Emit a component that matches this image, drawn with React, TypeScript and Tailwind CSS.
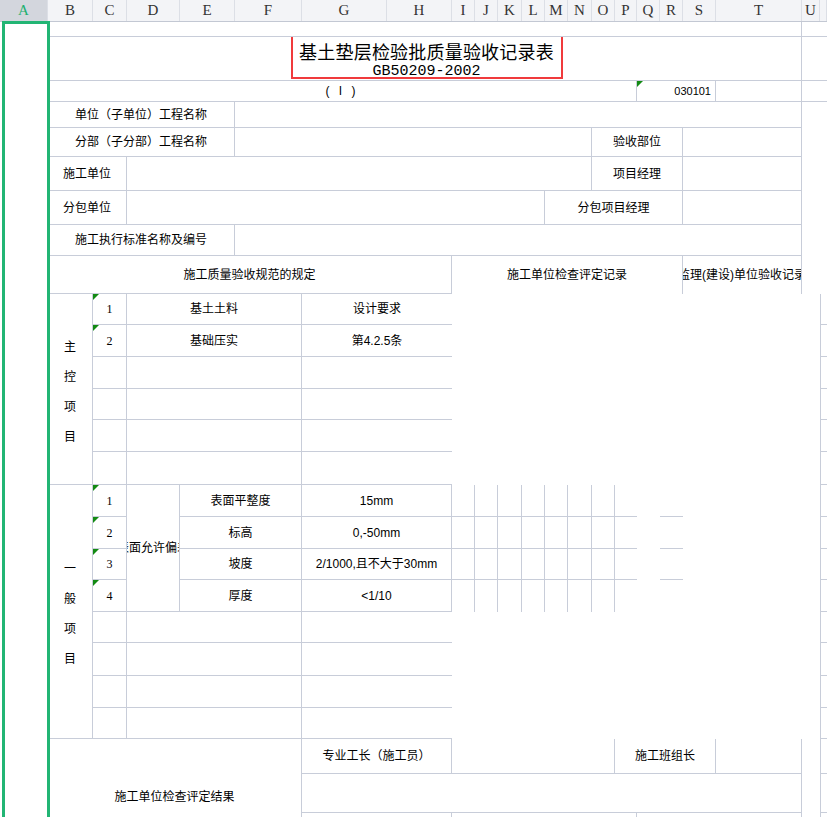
import React from 'react';

const COLS = ['A', 'B', 'C', 'D', 'E', 'F', 'G', 'H', 'I', 'J', 'K', 'L', 'M', 'N', 'O', 'P', 'Q', 'R', 'S', 'T', 'U', ''];
const WIDTHS = [48, 45, 34, 53, 55, 67, 85, 65, 23, 23, 24, 23, 23, 24, 23, 22, 23, 23, 33, 86, 18, 7];

// one sheet cell; borders are drawn on the right / bottom like a spreadsheet grid
const C: React.FC<{ c?: string; children?: React.ReactNode }> = ({ c = '', children }) => (
  <div className={`relative flex items-center justify-center overflow-hidden whitespace-nowrap border-[#c8cdd9] ${c}`}>
    {children}
  </div>
);

// little green "number stored as text" marker
const Tri = () => (
  <span className="absolute left-0 top-0 h-[6px] w-[6px] bg-[#138a13] [clip-path:polygon(0_0,100%_0,0_100%)]" />
);

const Num: React.FC<{ n?: string; mark?: boolean; c?: string }> = ({ n, mark, c = 'border-b border-r' }) => (
  <C c={`${c} font-['Liberation_Serif',serif]`}>
    {mark && <Tri />}
    {n}
  </C>
);

const TailTop = () => (
  <>
    <C c="border-b" />
    <C c="border-b" />
  </>
);
const TailMid = () => (
  <>
    <C />
    <C />
  </>
);
const TailLow = () => (
  <>
    <C />
    <C c="border-l border-b" />
  </>
);

const Vertical: React.FC<{ text: string; c?: string }> = ({ text, c = '' }) => (
  <div className={`flex flex-col items-center leading-[30px] ${c}`}>
    {text.split('').map((ch, i) => (
      <span key={i}>{ch}</span>
    ))}
  </div>
);

const App: React.FC = () => {
  return (
    <div className="h-[817px] w-[827px] overflow-hidden bg-white text-[12px] text-black font-['Liberation_Sans','Noto_Sans_CJK_SC',sans-serif]">
      {/* column letters */}
      <div className="flex h-[22px] border-b border-[#c3c8d3] bg-[#f3f4f7]">
        {COLS.map((l, i) => (
          <div
            key={i}
            className={`flex shrink-0 items-center justify-center border-r border-[#dcdfe6] text-[15px] font-['Liberation_Serif',serif] ${
              i === 0 ? 'bg-[#d3d6dd] text-[#22b06f]' : 'text-[#333]'
            }`}
            style={{ width: WIDTHS[i] }}
          >
            {l}
          </div>
        ))}
      </div>

      <div className="grid grid-cols-[48px_45px_34px_53px_55px_67px_85px_65px_23px_23px_24px_23px_23px_24px_23px_22px_23px_23px_33px_86px_18px_7px] grid-rows-[15px_44px_21px_26px_29px_34px_34px_31px_38px_31px_32px_32px_31px_32px_33px_32px_32px_31px_32px_31px_33px_32px_31px_35px_39px_42px]">
        {/* selected column A */}
        <div className="relative z-10 row-span-26 -mt-[1px] ml-[2px] w-[48px] border-[3px] border-[#22b574]" />

        {/* r1 */}
        <C c="col-span-19 border-b border-r" />
        <TailTop />

        {/* r2 title */}
        <C c="col-span-19 border-b border-r">
          <div className="mb-[5px] ml-[4px] flex h-[45px] w-[272px] flex-col items-center border-2 border-[#f03a3c] pt-[5px]">
            <div className="text-[18px] leading-[20px] tracking-[0.2px] font-['Noto_Sans_CJK_SC',sans-serif]">基土垫层检验批质量验收记录表</div>
            <div className="mt-[3px] text-[15px] leading-[16px] font-['Liberation_Mono',monospace]">GB50209-2002</div>
          </div>
        </C>
        <TailTop />

        {/* r3 */}
        <C c="col-span-15 border-b border-r tracking-[3px]">( I )</C>
        <C c="col-span-3 border-b border-r justify-end pr-[4px] text-[11px]">
          <Tri />
          030101
        </C>
        <C c="border-b border-r" />
        <TailTop />

        {/* r4 */}
        <C c="col-span-4 border-b border-r">单位（子单位）工程名称</C>
        <C c="col-span-15 border-b border-r" />
        <TailMid />

        {/* r5 */}
        <C c="col-span-4 border-b border-r">分部（子分部）工程名称</C>
        <C c="col-span-9 border-b border-r" />
        <C c="col-span-4 border-b border-r">验收部位</C>
        <C c="col-span-2 border-b border-r" />
        <TailMid />

        {/* r6 */}
        <C c="col-span-2 border-b border-r">施工单位</C>
        <C c="col-span-11 border-b border-r" />
        <C c="col-span-4 border-b border-r">项目经理</C>
        <C c="col-span-2 border-b border-r" />
        <TailMid />

        {/* r7 */}
        <C c="col-span-2 border-b border-r">分包单位</C>
        <C c="col-span-9 border-b border-r" />
        <C c="col-span-6 border-b border-r">分包项目经理</C>
        <C c="col-span-2 border-b border-r" />
        <TailMid />

        {/* r8 */}
        <C c="col-span-4 border-b border-r">施工执行标准名称及编号</C>
        <C c="col-span-15 border-b border-r" />
        <TailMid />

        {/* r9 */}
        <C c="col-span-7 border-b border-r">施工质量验收规范的规定</C>
        <C c="col-span-10 border-r">施工单位检查评定记录</C>
        <C c="col-span-2 border-r">监理(建设)单位验收记录</C>
        <TailMid />

        {/* r10-15 main control items */}
        <C c="row-span-6 border-b border-r">
          <Vertical text="主控项目" c="pt-[6px]" />
        </C>
        <Num n="1" mark />
        <C c="col-span-3 border-b border-r">基土土料</C>
        <C c="col-span-2 border-b">设计要求</C>
        <C c="col-span-12 row-span-6" />
        <TailLow />

        <Num n="2" mark />
        <C c="col-span-3 border-b border-r">基础压实</C>
        <C c="col-span-2 border-b">第4.2.5条</C>
        <TailLow />

        <Num />
        <C c="col-span-3 border-b border-r" />
        <C c="col-span-2 border-b" />
        <TailLow />

        <Num />
        <C c="col-span-3 border-b border-r" />
        <C c="col-span-2 border-b" />
        <TailLow />

        <Num />
        <C c="col-span-3 border-b border-r" />
        <C c="col-span-2 border-b" />
        <TailLow />

        <Num />
        <C c="col-span-3 border-b border-r" />
        <C c="col-span-2 border-b" />
        <TailLow />

        {/* r16-23 general items */}
        <C c="row-span-8 border-b border-r">
          <Vertical text="一般项目" c="pt-[4px]" />
        </C>
        <Num n="1" mark />
        <C c="row-span-4 border-b border-r">表面允许偏差</C>
        <C c="col-span-2 border-b border-r">表面平整度</C>
        <C c="col-span-2 border-b border-r">15mm</C>
        <C c="border-b border-r" />
        <C c="border-b border-r" />
        <C c="border-b border-r" />
        <C c="border-b border-r" />
        <C c="border-b border-r" />
        <C c="border-b border-r" />
        <C c="border-b border-r" />
        <C c="border-b" />
        <C />
        <C c="border-b" />
        <C c="col-span-2 row-span-4" />
        <TailLow />

        <Num n="2" mark />
        <C c="col-span-2 border-b border-r">标高</C>
        <C c="col-span-2 border-b border-r">0,-50mm</C>
        <C c="border-b border-r" />
        <C c="border-b border-r" />
        <C c="border-b border-r" />
        <C c="border-b border-r" />
        <C c="border-b border-r" />
        <C c="border-b border-r" />
        <C c="border-b border-r" />
        <C c="border-b" />
        <C />
        <C c="border-b" />
        <TailLow />

        <Num n="3" mark />
        <C c="col-span-2 border-b border-r">坡度</C>
        <C c="col-span-2 border-b border-r">2/1000,且不大于30mm</C>
        <C c="border-b border-r" />
        <C c="border-b border-r" />
        <C c="border-b border-r" />
        <C c="border-b border-r" />
        <C c="border-b border-r" />
        <C c="border-b border-r" />
        <C c="border-b border-r" />
        <C c="border-b" />
        <C />
        <C c="border-b" />
        <TailLow />

        <Num n="4" mark />
        <C c="col-span-2 border-b border-r">厚度</C>
        <C c="col-span-2 border-b border-r">&lt;1/10</C>
        <C c="border-r" />
        <C c="border-r" />
        <C c="border-r" />
        <C c="border-r" />
        <C c="border-r" />
        <C c="border-r" />
        <C c="border-r" />
        <C />
        <C />
        <C />
        <TailLow />

        <Num />
        <C c="col-span-3 border-b border-r" />
        <C c="col-span-2 border-b" />
        <C c="col-span-12 row-span-4" />
        <TailLow />

        <Num />
        <C c="col-span-3 border-b border-r" />
        <C c="col-span-2 border-b" />
        <TailLow />

        <Num />
        <C c="col-span-3 border-b border-r" />
        <C c="col-span-2 border-b" />
        <TailLow />

        <Num />
        <C c="col-span-3 border-b border-r" />
        <C c="col-span-2 border-b" />
        <TailLow />

        {/* r24-26 signatures */}
        <C c="col-span-5 row-span-3 border-r">施工单位检查评定结果</C>
        <C c="col-span-2 border-b border-r">专业工长（施工员）</C>
        <C c="col-span-7 border-b border-r" />
        <C c="col-span-4 border-b border-r">施工班组长</C>
        <C c="border-b border-r" />
        <TailLow />

        <C c="col-span-14 border-b border-r" />
        <TailLow />

        <C c="col-span-2 border-r" />
        <C c="col-span-8 border-r" />
        <C c="col-span-4 border-r" />
        <TailLow />
      </div>
    </div>
  );
};

export default App;
